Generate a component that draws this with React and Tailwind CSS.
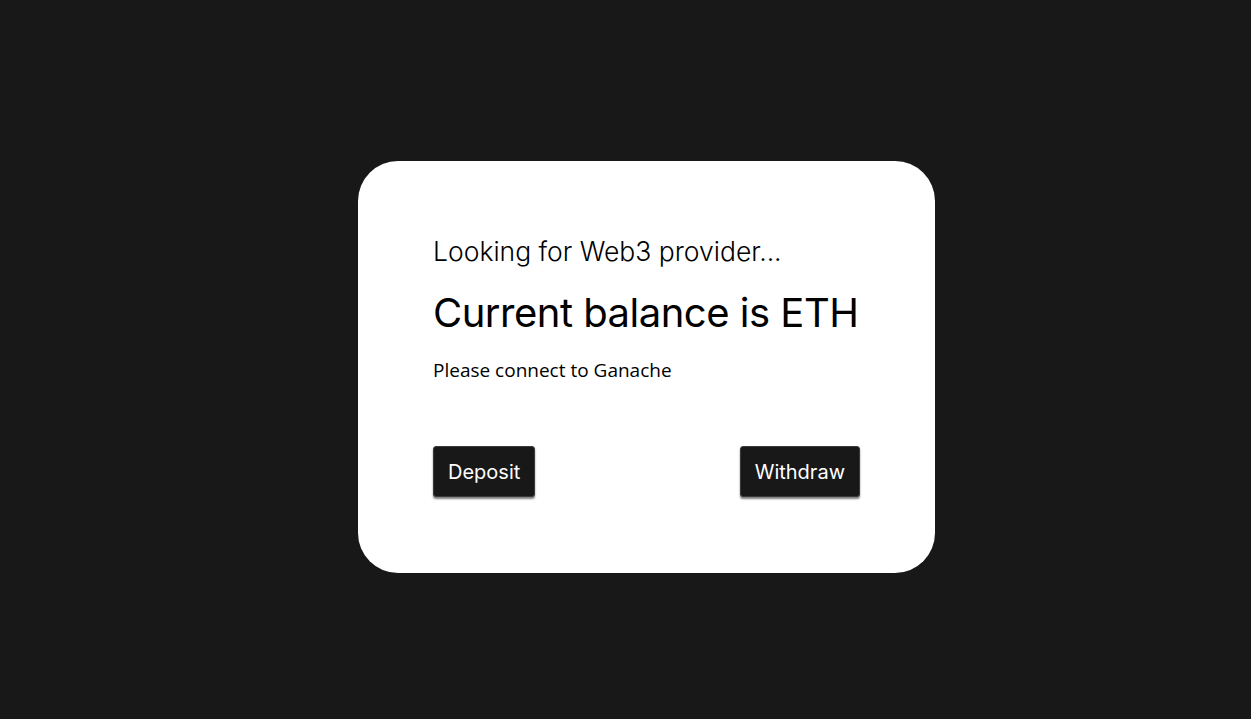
export default function App() {
  return (
    <div className="min-h-screen bg-[#181818] flex items-center justify-center pl-[42px] pt-[15px]">
      <div className="w-[577px] h-[412px] bg-white rounded-[40px] px-[75px] pt-[70px] flex flex-col">
        <p className="font-['Inter',sans-serif] text-[26.5px] leading-[40px] font-light text-black whitespace-nowrap">
          Looking for Web3 provider...
        </p>
        <h1 className="mt-[17px] font-['Inter',sans-serif] text-[40px] leading-[50px] font-normal tracking-[-0.5px] text-black whitespace-nowrap">
          Current balance is ETH
        </h1>
        <p className="mt-[18px] font-['Open_Sans',sans-serif] text-[19px] leading-[28px] text-black">
          Please connect to Ganache
        </p>
        <div className="mt-[62px] flex justify-between">
          <button className="h-[51px] px-[14px] bg-[#181818] border border-[#3a3a3a] text-white rounded-[3px] shadow-[0_2px_2px_rgba(0,0,0,0.5)] font-['Inter',sans-serif] text-[20px]">
            Deposit
          </button>
          <button className="h-[51px] px-[14px] bg-[#181818] border border-[#3a3a3a] text-white rounded-[3px] shadow-[0_2px_2px_rgba(0,0,0,0.5)] font-['Inter',sans-serif] text-[20px]">
            Withdraw
          </button>
        </div>
      </div>
    </div>
  )
}
